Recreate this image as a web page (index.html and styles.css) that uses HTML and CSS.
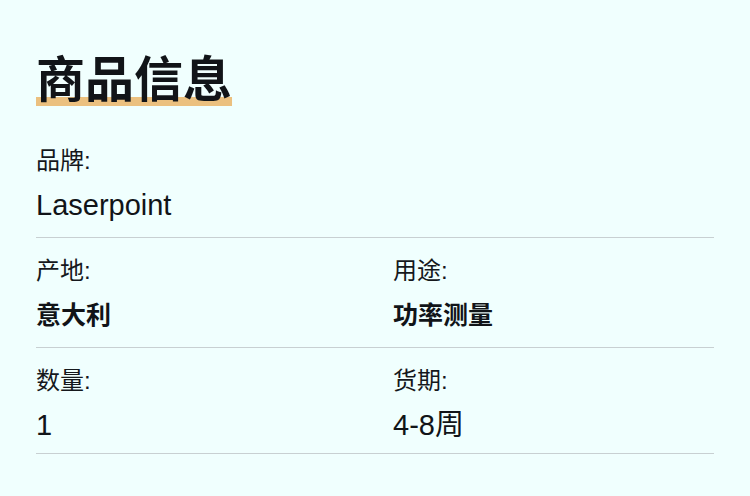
FILE: index.html
```html
<!DOCTYPE html>
<html lang="zh-CN">
<head>
<meta charset="utf-8">
<title>商品信息</title>
<link rel="stylesheet" href="styles.css">
</head>
<body>
<main class="page">
  <h1 class="title"><span class="title-text">商品信息</span></h1>
  <div class="specs">
    <div class="row">
      <div class="field">
        <div class="label">品牌:</div>
        <div class="value">Laserpoint</div>
      </div>
    </div>
    <div class="row cols">
      <div class="field">
        <div class="label">产地:</div>
        <div class="value strong">意大利</div>
      </div>
      <div class="field">
        <div class="label">用途:</div>
        <div class="value strong">功率测量</div>
      </div>
    </div>
    <div class="row cols last">
      <div class="field">
        <div class="label">数量:</div>
        <div class="value">1</div>
      </div>
      <div class="field">
        <div class="label">货期:</div>
        <div class="value">4-8周</div>
      </div>
    </div>
  </div>
</main>
</body>
</html>
```

FILE: styles.css
```css
html, body {
  margin: 0;
  padding: 0;
  background: #f0fffe;
}

body {
  font-family: "Liberation Sans", "Noto Sans CJK SC", sans-serif;
  color: #111418;
}

.page {
  padding: 44px 36px 0 36px;
}

.title {
  margin: 0 0 38px 0;
  font-size: 49px;
  line-height: 64px;
  font-weight: 700;
  font-family: "Noto Sans CJK SC", sans-serif;
}

.title-text {
  text-decoration: underline;
  text-decoration-color: #ebc07f;
  text-decoration-thickness: 9px;
  text-underline-offset: 0px;
  text-decoration-skip-ink: auto;
}

.row {
  border-bottom: 1px solid #c8d0d2;
  padding: 0 0 15px 0;
}

.row + .row {
  padding-top: 18px;
}

.row.last {
  padding-bottom: 11px;
}

.cols {
  display: grid;
  grid-template-columns: 1fr 1fr;
  column-gap: 36px;
}

.label {
  font-size: 24px;
  line-height: 30px;
  margin-bottom: 12px;
  color: #15181c;
}

.value {
  font-size: 29px;
  line-height: 34px;
}

.value.strong {
  font-size: 25px;
  font-weight: 700;
}
```
